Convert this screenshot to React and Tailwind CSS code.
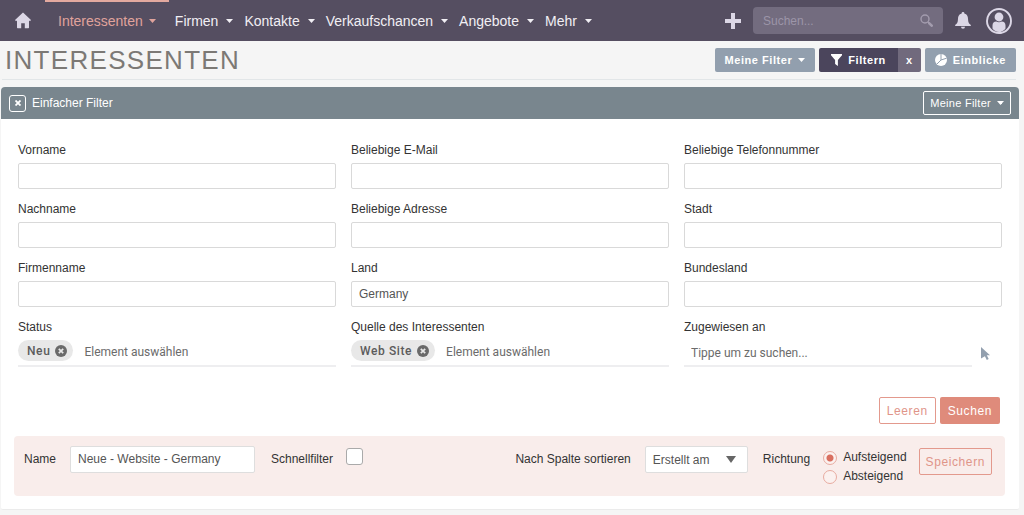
import { useState } from 'react';

const NAV_ITEMS = ['Interessenten', 'Firmen', 'Kontakte', 'Verkaufschancen', 'Angebote', 'Mehr'];

const TEXT_FIELDS = [
    { id: 'first_name', label: 'Vorname' },
    { id: 'email', label: 'Beliebige E-Mail' },
    { id: 'phone', label: 'Beliebige Telefonnummer' },
    { id: 'last_name', label: 'Nachname' },
    { id: 'address', label: 'Beliebige Adresse' },
    { id: 'city', label: 'Stadt' },
    { id: 'account_name', label: 'Firmenname' },
    { id: 'country', label: 'Land', value: 'Germany' },
    { id: 'state', label: 'Bundesland' },
];

function Caret({ className }) {
    return (
        <svg className={className} width="7" height="4" viewBox="0 0 7 4" fill="currentColor" aria-hidden="true">
            <path d="M0 0h7L3.5 4z" />
        </svg>
    );
}

function HomeIcon() {
    return (
        <svg width="16" height="17" viewBox="0 0 16 17" fill="currentColor" aria-hidden="true">
            <path d="M8 .5 16 8l-1 1.2-1-.8v7.2a.6.6 0 0 1-.6.6H9.8v-5H6.2v5H2.6a.6.6 0 0 1-.6-.6V8.4l-1 .8L0 8z" />
        </svg>
    );
}

function PlusIcon() {
    return (
        <svg width="16" height="16" viewBox="0 0 16 16" fill="currentColor" aria-hidden="true">
            <path d="M6 0h4v6h6v4h-6v6H6v-6H0V6h6z" />
        </svg>
    );
}

function SearchIcon() {
    return (
        <svg width="13" height="13" viewBox="0 0 13 13" fill="none" stroke="currentColor" aria-hidden="true">
            <circle cx="5" cy="5" r="4" strokeWidth="1.4" />
            <path d="M8 8l1.5 1.5" strokeWidth="1.4" />
            <path d="M9.3 9.3l2.4 2.4" strokeWidth="2.6" strokeLinecap="round" />
        </svg>
    );
}

function BellIcon() {
    return (
        <svg width="16" height="17" viewBox="0 0 16 17" fill="currentColor" aria-hidden="true">
            <path d="M8 0a1.3 1.3 0 0 0-1.3 1.5C4.2 2.1 3 4.2 3 6.700c0 3.800-1.300 5.200-2.600 6.100-.5.500-.3 1.200.4 1.200h14.400c.7 0 .9-.7.4-1.200C14.300 11.900 13 10.500 13 6.700c0-2.500-1.200-4.600-3.700-5.200A1.300 1.300 0 0 0 8 0zM6 14.700a2 2 0 0 0 4 0z" />
        </svg>
    );
}

function UserIcon() {
    return (
        <svg width="26" height="26" viewBox="0 0 26 26" aria-hidden="true">
            <circle cx="13" cy="13" r="12" fill="none" stroke="currentColor" strokeWidth="1.9" />
            <circle cx="13" cy="9" r="4.4" fill="currentColor" />
            <path d="M6.500 20.500v-3c0-2.700 1.500-4 3.700-4 1.700 1.100 3.900 1.100 5.600 0 2.200 0 3.700 1.300 3.700 4v3c-1.500 2.300-3.800 3.500-6.500 3.500s-5-1.200-6.500-3.500z" fill="currentColor" />
        </svg>
    );
}

function FunnelIcon() {
    return (
        <svg width="11" height="12" viewBox="0 0 11 12" fill="currentColor" aria-hidden="true">
            <path d="M0 0h11v1.200L6.900 6v6L4.100 10V6L0 1.200z" />
        </svg>
    );
}

function PieIcon() {
    return (
        <svg width="12" height="12" viewBox="0 0 12 12" aria-hidden="true">
            <circle cx="6" cy="6" r="6" fill="currentColor" />
            <path d="M6 0v6l5.600-1.800M6 6l-4.200 4.200" fill="none" stroke="#929fae" strokeWidth="1" />
        </svg>
    );
}

function RemoveIcon() {
    return (
        <svg width="12" height="12" viewBox="0 0 12 12" aria-hidden="true">
            <circle cx="6" cy="6" r="6" fill="#6a6a6a" />
            <path d="M3.800 3.800l4.400 4.400M8.200 3.800L3.800 8.200" stroke="#e8e8e8" strokeWidth="1.700" />
        </svg>
    );
}

function PointerIcon() {
    return (
        <svg width="9" height="13" viewBox="0 0 9 13" fill="currentColor" aria-hidden="true">
            <path d="M0 0l9 8.300H5.800l1.900 3.700-1.900 1-1.900-3.800L0 11.500z" />
        </svg>
    );
}

function NavBar() {
    return (
        <header className="flex h-[41px] items-center bg-[#554e61] pr-3 text-[#f1eff4]">
            <a href="#home" aria-label="Startseite" className="w-[45px] pl-[15px] text-[#dcd7e6]">
                <HomeIcon />
            </a>
            <nav className="flex h-full gap-px text-sm">
                {NAV_ITEMS.map((item) => (
                    <a
                        key={item}
                        href={`#${item}`}
                        className={
                            item === 'Interessenten'
                                ? 'flex items-center gap-[6px] border-t-2 border-[#e3a99f] px-[13px] pb-[2px] text-[#e0a39c]'
                                : 'flex items-center gap-2 px-[5px]'
                        }
                    >
                        {item}
                        <Caret />
                    </a>
                ))}
            </nav>
            <div className="ml-auto flex items-center text-[#dcd7e6]">
                <button type="button" aria-label="Neu anlegen">
                    <PlusIcon />
                </button>
                <div className="ml-3 flex h-[27px] w-[190px] items-center rounded bg-[#736c7f] px-[10px]">
                    <input
                        type="search"
                        aria-label="Suchen"
                        placeholder="Suchen..."
                        className="min-w-0 flex-1 text-xs outline-none placeholder:text-[#9c95a8]"
                    />
                    <button type="button" aria-label="Suche starten" className="text-[#a39cae]">
                        <SearchIcon />
                    </button>
                </div>
                <button type="button" aria-label="Benachrichtigungen" className="ml-3">
                    <BellIcon />
                </button>
                <button type="button" aria-label="Profil" className="ml-[15px]">
                    <UserIcon />
                </button>
            </div>
        </header>
    );
}

function PageTitle() {
    return (
        <div className="mr-2 ml-[2px] flex h-[39px] items-center justify-between border-b border-[#e2e6e8] pl-[3px]">
            <h1 className="text-[26px] leading-[38px] tracking-wider text-[#7c7975]">INTERESSENTEN</h1>
            <div className="flex h-6 gap-1 text-[11px] font-bold tracking-wider text-white">
                <button type="button" className="flex items-center gap-[6px] rounded-xs bg-[#929fae] px-[10px]">
                    Meine Filter
                    <Caret />
                </button>
                <div className="flex overflow-hidden rounded-xs">
                    <button type="button" className="flex items-center gap-[6px] bg-[#4b455c] px-3">
                        <FunnelIcon />
                        Filtern
                    </button>
                    <button type="button" aria-label="Filter entfernen" className="w-[23px] bg-[#716a7d]">x</button>
                </div>
                <button type="button" className="flex items-center gap-[6px] rounded-xs bg-[#929fae] px-[10px]">
                    <PieIcon />
                    Einblicke
                </button>
            </div>
        </div>
    );
}

function TextField({ id, label, value = '' }) {
    return (
        <div>
            <label htmlFor={id} className="block">{label}</label>
            <input
                id={id}
                type="text"
                defaultValue={value}
                className="mt-1 block h-[26px] w-full rounded-xs border border-[#d9d9d9] bg-white px-[7px] text-[#555]"
            />
        </div>
    );
}

function ChipField({ id, label, chip }) {
    const [selected, setSelected] = useState(true);

    return (
        <div>
            <label htmlFor={id} className="block">{label}</label>
            <div className="mt-1 flex h-[27px] items-start border-b-2 border-[#eeeef0] font-[Roboto,sans-serif]">
                {selected && (
                    <span className="mr-[11px] flex h-[21px] items-center gap-[5px] rounded-full bg-[#e8e8e8] pr-[6px] pl-[9px] font-medium tracking-wider text-[#5c5c5c]">
                        {chip}
                        <button type="button" aria-label={`${chip} entfernen`} onClick={() => setSelected(false)}>
                            <RemoveIcon />
                        </button>
                    </span>
                )}
                <input
                    id={id}
                    type="text"
                    placeholder="Element auswählen"
                    className="h-6 min-w-0 flex-1 outline-none placeholder:text-[#6b6b6b]"
                />
            </div>
        </div>
    );
}

function AssignedField() {
    return (
        <div>
            <label htmlFor="assigned" className="block">Zugewiesen an</label>
            <div className="mt-1 flex items-center">
                <input
                    id="assigned"
                    type="text"
                    placeholder="Tippe um zu suchen..."
                    className="h-[27px] min-w-0 flex-1 border-b-2 border-[#eeeef0] px-[7px] font-[Roboto,sans-serif] outline-none placeholder:text-[#6b6b6b]"
                />
                <button type="button" aria-label="Benutzer auswählen" className="mr-3 ml-[9px] text-[#929fae]">
                    <PointerIcon />
                </button>
            </div>
        </div>
    );
}

function DirectionOption({ value, label, defaultChecked }) {
    return (
        <label className="flex h-[19px] items-center gap-[6px]">
            <input
                type="radio"
                name="direction"
                value={value}
                defaultChecked={defaultChecked}
                className="size-[14px] appearance-none rounded-full border border-[#e8aba0] bg-[#fbf1ef] checked:bg-[radial-gradient(circle,#d96f60_3px,#fbf1ef_4px)]"
            />
            {label}
        </label>
    );
}

function SaveFilterBar() {
    return (
        <div className="mr-[14px] ml-[13px] mt-3 flex h-[60px] items-start rounded bg-[#f9edeb] pt-[10px] pr-[13px] pl-[10px] leading-[27px]">
            <label htmlFor="filter_name">Name</label>
            <input
                id="filter_name"
                type="text"
                defaultValue="Neue - Website - Germany"
                className="ml-[14px] h-[27px] w-[185px] rounded-xs border border-[#dedede] bg-white px-[7px] text-[#555]"
            />
            <label htmlFor="quick_filter" className="ml-4">Schnellfilter</label>
            <input
                id="quick_filter"
                type="checkbox"
                className="mt-[2px] ml-[13px] size-[17px] appearance-none rounded-[3px] border border-[#aaa] bg-white checked:bg-[#dd8878]"
            />
            <label htmlFor="sort_column" className="ml-auto">Nach Spalte sortieren</label>
            <div className="relative ml-[14px]">
                <select
                    id="sort_column"
                    className="block h-[27px] w-[103px] appearance-none rounded-xs border border-[#dedede] bg-white px-[7px] text-[#555]"
                >
                    <option>Erstellt am</option>
                </select>
                <svg className="pointer-events-none absolute top-[10px] right-3" width="10" height="7" viewBox="0 0 10 7" fill="#666" aria-hidden="true">
                    <path d="M0 0h10L5 7z" />
                </svg>
            </div>
            <fieldset className="ml-[15px] flex">
                <legend className="float-left mr-[13px]">Richtung</legend>
                <div className="mt-[2px] leading-[19px]">
                    <DirectionOption value="asc" label="Aufsteigend" defaultChecked />
                    <DirectionOption value="desc" label="Absteigend" />
                </div>
            </fieldset>
            <button type="button" className="mt-[2px] ml-3 h-[27px] rounded-xs border border-[#e3998d] px-[6px] leading-none tracking-wider text-[#df9589]">
                Speichern
            </button>
        </div>
    );
}

function FilterPanel() {
    return (
        <section className="mt-[7px] mr-[5px] ml-px rounded-t rounded-b-xs border-b border-[#ebebeb] bg-white pb-[13px]">
            <div className="flex h-8 items-center rounded-t bg-[#79868e] pr-2 pl-2 text-white">
                <button
                    type="button"
                    aria-label="Schließen"
                    className="flex size-[17px] items-center justify-center rounded-[3px] border border-white"
                >
                    <svg width="6" height="6" viewBox="0 0 6 6" stroke="currentColor" strokeWidth="1.800" aria-hidden="true">
                        <path d="M.5.5l5 5M5.500.5l-5 5" />
                    </svg>
                </button>
                <h2 className="ml-[6px]">Einfacher Filter</h2>
                <button
                    type="button"
                    className="ml-auto flex h-6 items-center gap-[6px] rounded-xs border border-white px-[6px] text-[11px] tracking-wide"
                >
                    Meine Filter
                    <Caret />
                </button>
            </div>
            <form onSubmit={(e) => e.preventDefault()}>
                <div className="grid grid-cols-3 gap-x-[15px] gap-y-[11px] px-[17px] pt-[22px]">
                    {TEXT_FIELDS.map((field) => (
                        <TextField key={field.id} {...field} />
                    ))}
                    <ChipField id="status" label="Status" chip="Neu" />
                    <ChipField id="lead_source" label="Quelle des Interessenten" chip="Web Site" />
                    <AssignedField />
                </div>
                <div className="mt-[30px] mr-[19px] flex justify-end gap-1 tracking-wider">
                    <button type="reset" className="h-[27px] rounded-xs border border-[#e3998d] px-[7px] text-[#df9589]">
                        Leeren
                    </button>
                    <button type="submit" className="h-[27px] rounded-xs bg-[#df8b7b] px-2 text-white">
                        Suchen
                    </button>
                </div>
                <SaveFilterBar />
            </form>
        </section>
    );
}

export default function App() {
    return (
        <div className="min-h-screen bg-[#f5f5f5] font-['Liberation_Sans',Arial,sans-serif] text-xs leading-[18px] text-[#333]">
            <NavBar />
            <main>
                <PageTitle />
                <FilterPanel />
            </main>
        </div>
    );
}
